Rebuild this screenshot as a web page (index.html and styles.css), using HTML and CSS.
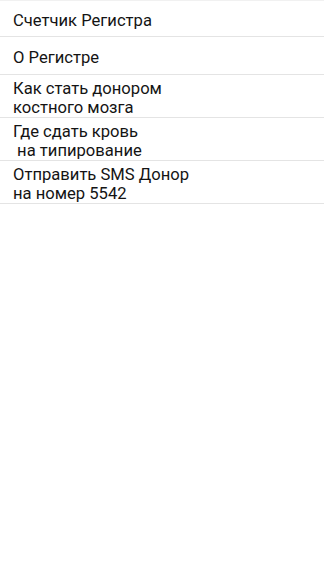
FILE: index.html
```html
<!DOCTYPE html>
<html lang="ru">
<head>
<meta charset="utf-8">
<meta name="viewport" content="width=device-width, initial-scale=1">
<title>Регистр</title>
<link rel="stylesheet" href="styles.css">
</head>
<body>
<ul class="menu">
  <li class="item">Счетчик Регистра</li>
  <li class="item">О Регистре</li>
  <li class="item">Как стать донором<br>костного мозга</li>
  <li class="item">Где сдать кровь<br>&nbsp;на типирование</li>
  <li class="item">Отправить SMS Донор<br>на номер 5542</li>
</ul>
</body>
</html>
```
FILE: styles.css
```css
html, body {
  margin: 0;
  padding: 0;
  background: #ffffff;
}

body {
  font-family: Roboto, "Noto Sans", "Liberation Sans", sans-serif;
  font-size: 16.6px;
  color: #141414;
}

.menu {
  list-style: none;
  margin: 0;
  padding: 0;
  border-top: 1px solid #f1f1f1;
}

.item {
  display: flex;
  flex-direction: column;
  justify-content: center;
  min-height: 33px;
  padding: 4px 13px 0;
  border-bottom: 1px solid #e4e4e4;
  line-height: 19px;
}

.item:first-child {
  min-height: 31px;
}
```
